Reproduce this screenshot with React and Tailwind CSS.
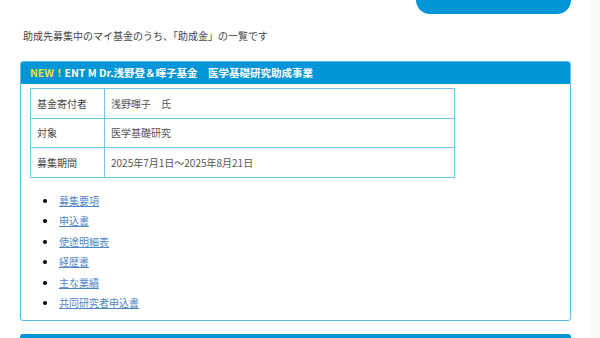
import React from 'react'

const font = { fontFamily: '"Noto Sans CJK JP", "Noto Sans", sans-serif' }

const rows = [
  { label: '基金寄付者', value: '浅野暉子　氏' },
  { label: '対象', value: '医学基礎研究' },
  { label: '募集期間', value: '2025年7月1日～2025年8月21日' },
]

const links = ['募集要項', '申込書', '使途明細表', '経歴書', '主な業績', '共同研究者申込書']

export default function App() {
  return (
    <div className="flex h-[338px] w-[600px] overflow-hidden bg-white" style={font}>
      <div className="w-[590px] shrink-0">
        {/* top tab button */}
        <div className="flex justify-end pr-[19px]">
          <div className="-mt-[14px] h-[28px] w-[155px] rounded-[14px] bg-[#0096d8]"></div>
        </div>

        <p className="ml-[23px] mt-[15px] text-[10px] leading-[14px] text-[#444]">
          助成先募集中のマイ基金のうち、「助成金」の一覧です
        </p>

        {/* fund box */}
        <div className="ml-[20px] mt-[18px] w-[551px] overflow-hidden rounded-[3px] border border-[#5cbde9]">
          <div className="flex h-[22px] items-center bg-[#0096d8] pl-[9px] text-[10.5px] font-bold text-white">
            <span className="text-[#f2e422]">NEW！</span>
            <span>ENT M Dr.浅野登＆暉子基金　医学基礎研究助成事業</span>
          </div>

          <div className="px-[9px] pb-[10px] pt-[4px]">
            <table className="w-[425px] border-collapse text-[10px] text-[#444]">
              <tbody>
                {rows.map((r) => (
                  <tr key={r.label} className="h-[29.5px]">
                    <td className="w-[74px] border-[1.5px] border-[#6cc6ee] pl-[6px]">{r.label}</td>
                    <td className="border-[1.5px] border-[#6cc6ee] pl-[6px] text-[#555]">{r.value}</td>
                  </tr>
                ))}
              </tbody>
            </table>

            <ul className="ml-[28px] mt-[16px] list-disc text-[10px] leading-[14px]">
              {links.map((l) => (
                <li key={l} className="mb-[6.6px] pl-[1px] marker:text-black last:mb-0">
                  <a href="#" className="text-[#4f86c6] underline">{l}</a>
                </li>
              ))}
            </ul>
          </div>
        </div>

        {/* next box top */}
        <div className="ml-[20px] mt-[13px] h-[20px] w-[551px] rounded-t-[3px] bg-[#0096d8]"></div>
      </div>
      <div className="flex-1 bg-[#fafafa]"></div>
    </div>
  )
}
